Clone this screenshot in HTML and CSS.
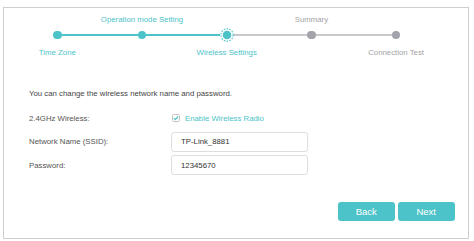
FILE: index.html
```html
<!DOCTYPE html>
<html lang="en">
<head>
    <meta charset="UTF-8">
    <meta name="viewport" content="width=device-width, initial-scale=1.0">
    <title>Quick Setup - Wireless Settings</title>
    <link rel="stylesheet" href="styles.css">
</head>
<body>
    <div class="wizard">
        <!-- Progress steps -->
        <div class="steps">
            <div class="step-label top"></div>
            <div class="step-label top done">Operation mode Setting</div>
            <div class="step-label top"></div>
            <div class="step-label top">Summary</div>
            <div class="step-label top"></div>

            <div class="step-track first done"><span class="half"></span><span class="dot"></span><span class="half"></span></div>
            <div class="step-track done"><span class="half"></span><span class="dot"></span><span class="half"></span></div>
            <div class="step-track current">
                <span class="half"></span>
                <svg class="dot-current" width="14" height="14" viewBox="0 0 14 14">
                    <circle cx="7" cy="7" r="6.2" fill="none" stroke="#4cc3c8" stroke-width="1.1" stroke-dasharray="1.6 1.2"/>
                    <circle cx="7" cy="7" r="4.3" fill="#4cc3c8"/>
                </svg>
                <span class="half"></span>
            </div>
            <div class="step-track"><span class="half"></span><span class="dot"></span><span class="half"></span></div>
            <div class="step-track last"><span class="half"></span><span class="dot"></span><span class="half"></span></div>

            <div class="step-label bottom done">Time Zone</div>
            <div class="step-label bottom"></div>
            <div class="step-label bottom done">Wireless Settings</div>
            <div class="step-label bottom"></div>
            <div class="step-label bottom">Connection Test</div>
        </div>

        <p class="intro">You can change the wireless network name and password.</p>

        <div class="fields">
            <label class="field-label">2.4GHz Wireless:</label>
            <label class="check">
                <svg width="8" height="8" viewBox="0 0 8 8">
                    <rect x="0.5" y="0.5" width="7" height="7" rx="1" fill="#fff" stroke="#c4c4c4"/>
                    <path d="M1.8 4.1 L3.3 5.6 L6.2 2.5" fill="none" stroke="#4cc3c8" stroke-width="1.1"/>
                </svg>
                Enable Wireless Radio
            </label>

            <label class="field-label">Network Name (SSID):</label>
            <input class="text-input" type="text" value="TP-Link_8881">

            <label class="field-label">Password:</label>
            <input class="text-input" type="text" value="12345670">
        </div>

        <div class="actions">
            <button type="button" class="btn">Back</button>
            <button type="button" class="btn">Next</button>
        </div>
    </div>
</body>
</html>
```

FILE: styles.css
```css
/* Page */
body {
    margin: 0;
    background-color: #fff;
    font-family: "Liberation Sans", Arial, sans-serif;
    font-size: 7.8px;
    color: #444;
}

/* Wizard frame */
.wizard {
    width: 464px;
    height: 223px;
    margin: 7px 0 0 3px;
    padding: 7px 0 0 0;
    border: 1px solid #cfcfcf;
    box-sizing: content-box;
    display: flex;
    flex-direction: column;
}

/* Progress steps */
.steps {
    display: grid;
    grid-template-columns: repeat(5, 84.7px);
    grid-template-rows: 10px 20px 13px;
    margin-left: 11px;
}

.step-label {
    line-height: 10px;
    text-align: center;
    white-space: nowrap;
    color: #a3a3a3;
}

.step-label.done {
    color: #4cc3c8;
}

.step-label.bottom {
    align-self: end;
}

.step-track {
    display: flex;
    align-items: center;
}

.step-track .half {
    flex: 1;
    height: 2px;
    background-color: #c9c9cc;
}

.step-track.done .half,
.step-track.current .half:first-child {
    background-color: #4cc3c8;
}

.step-track.first .half:first-child,
.step-track.last .half:last-child {
    background-color: transparent;
}

.step-track .dot {
    width: 8.5px;
    height: 8.5px;
    border-radius: 50%;
    background-color: #a2a3ab;
}

.step-track.done .dot {
    background-color: #4cc3c8;
}

.dot-current {
    display: block;
}

/* Intro line */
.intro {
    margin: 30px 0 0 25px;
    line-height: 12px;
    color: #444;
}

/* Form rows */
.fields {
    display: grid;
    grid-template-columns: 142px 137px;
    grid-auto-rows: 20px;
    row-gap: 3.5px;
    margin: 8px 0 0 25px;
    align-items: center;
}

.field-label {
    color: #555;
}

.check {
    display: flex;
    align-items: center;
    gap: 5px;
    margin-left: 1px;
    color: #4cc3c8;
}

.check svg {
    display: block;
}

.text-input {
    width: 100%;
    height: 20px;
    padding: 0 9px;
    border: 1px solid #dedede;
    border-radius: 3px;
    box-sizing: border-box;
    font-family: inherit;
    font-size: 7.8px;
    color: #333;
    outline: none;
}

/* Buttons */
.actions {
    display: flex;
    justify-content: flex-end;
    gap: 2.5px;
    margin: 27px 13px 0 0;
}

.btn {
    width: 57.5px;
    height: 19px;
    padding: 0;
    border: none;
    border-radius: 3px;
    background-color: #4cc3c8;
    color: #fff;
    font-family: inherit;
    font-size: 9.5px;
    cursor: pointer;
}
```
